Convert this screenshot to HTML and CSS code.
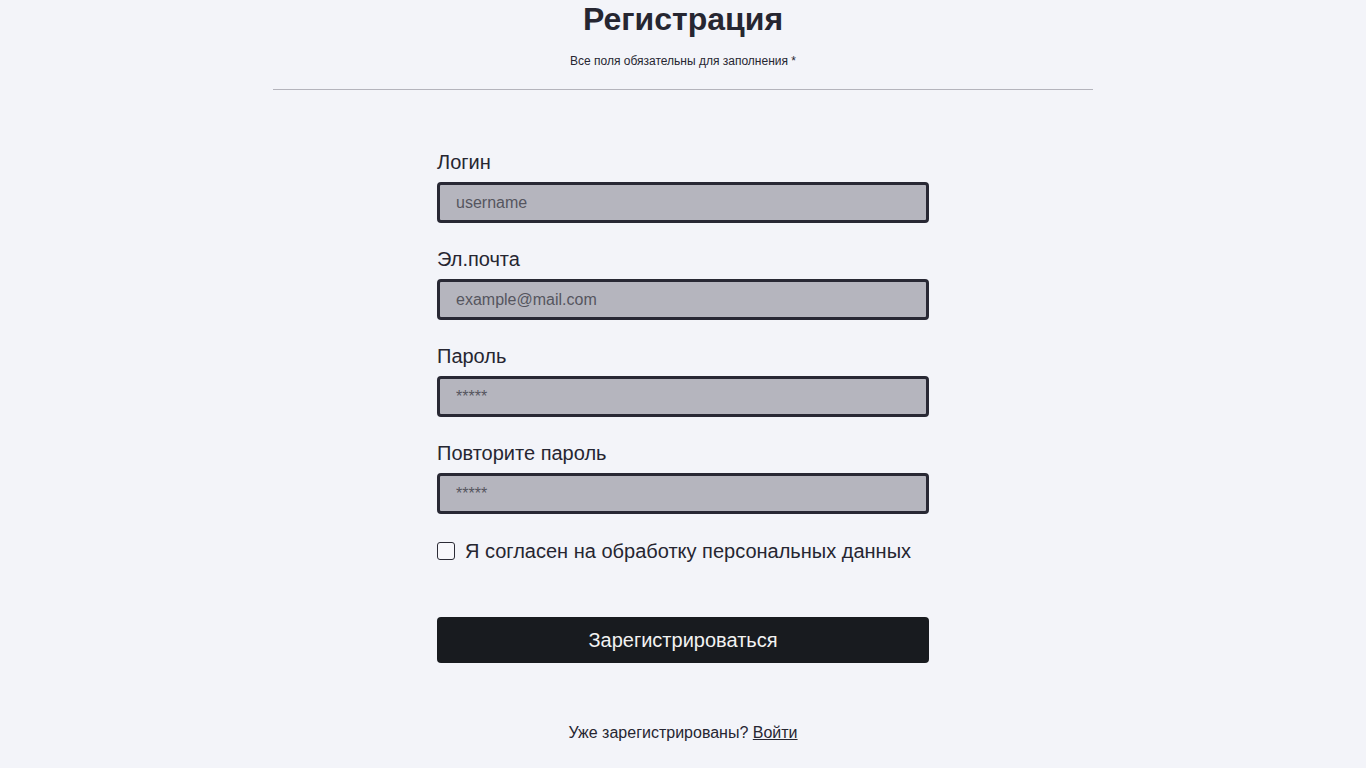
FILE: index.html
```html
<!DOCTYPE html>
<html lang="ru">
<head>
<meta charset="utf-8">
<title>Регистрация</title>
<link rel="stylesheet" href="styles.css">
</head>
<body>
<main class="page">
  <header class="head">
    <h1 class="title">Регистрация</h1>
    <p class="subtitle">Все поля обязательны для заполнения *</p>
  </header>
  <form class="form">
    <div class="field">
      <label class="label" for="login">Логин</label>
      <input class="input" id="login" type="text" placeholder="username">
    </div>
    <div class="field">
      <label class="label" for="email">Эл.почта</label>
      <input class="input" id="email" type="email" placeholder="example@mail.com">
    </div>
    <div class="field">
      <label class="label" for="pass">Пароль</label>
      <input class="input" id="pass" type="password" placeholder="*****">
    </div>
    <div class="field">
      <label class="label" for="pass2">Повторите пароль</label>
      <input class="input" id="pass2" type="password" placeholder="*****">
    </div>
    <label class="agree">
      <input class="check" type="checkbox">
      <span>Я согласен на обработку персональных данных</span>
    </label>
    <button class="submit" type="button">Зарегистрироваться</button>
  </form>
  <p class="foot">Уже зарегистрированы? <a class="link" href="#">Войти</a></p>
</main>
</body>
</html>
```

FILE: styles.css
```css
* { box-sizing: border-box; }
html, body {
  margin: 0;
  padding: 0;
  background: #f3f4f9;
  color: #262631;
  font-family: "Liberation Sans", Arial, sans-serif;
}
.page {
  display: flex;
  flex-direction: column;
  align-items: center;
  padding-top: 1px;
}
.head {
  width: 820px;
  text-align: center;
  border-bottom: 1px solid #b4b4bc;
  padding-bottom: 21px;
}
.title {
  margin: 0;
  font-size: 32px;
  line-height: 36px;
  font-weight: 700;
  color: #262631;
}
.subtitle {
  margin: 17px 0 0;
  font-size: 12px;
  line-height: 14px;
}
.form {
  width: 492px;
  margin-top: 60px;
  display: flex;
  flex-direction: column;
}
.field {
  display: flex;
  flex-direction: column;
  margin-bottom: 24px;
}
.label {
  font-size: 20px;
  line-height: 24px;
  margin-bottom: 8px;
}
.input {
  height: 41px;
  border: 3px solid #282834;
  border-radius: 4px;
  background: #b5b5be;
  padding: 0 16px;
  font-family: "Liberation Sans", Arial, sans-serif;
  font-size: 16px;
  color: #262631;
  outline: none;
}
.input::placeholder { color: #55555f; }
.agree {
  display: flex;
  align-items: center;
  gap: 10px;
  font-size: 20px;
  line-height: 24px;
  margin-top: 1px;
}
.check {
  appearance: none;
  -webkit-appearance: none;
  margin: 0;
  width: 18px;
  height: 18px;
  border: 1.5px solid #2b2b36;
  border-radius: 3px;
  background: #f7f7fb;
}
.submit {
  margin-top: 54px;
  height: 46px;
  border: none;
  border-radius: 4px;
  background: #181b1f;
  color: #f2f2f2;
  font-family: "Liberation Sans", Arial, sans-serif;
  font-size: 20px;
}
.foot {
  margin: 61px 0 0;
  font-size: 16px;
  line-height: 18px;
}
.link {
  color: #262631;
  text-decoration: underline;
}
```
